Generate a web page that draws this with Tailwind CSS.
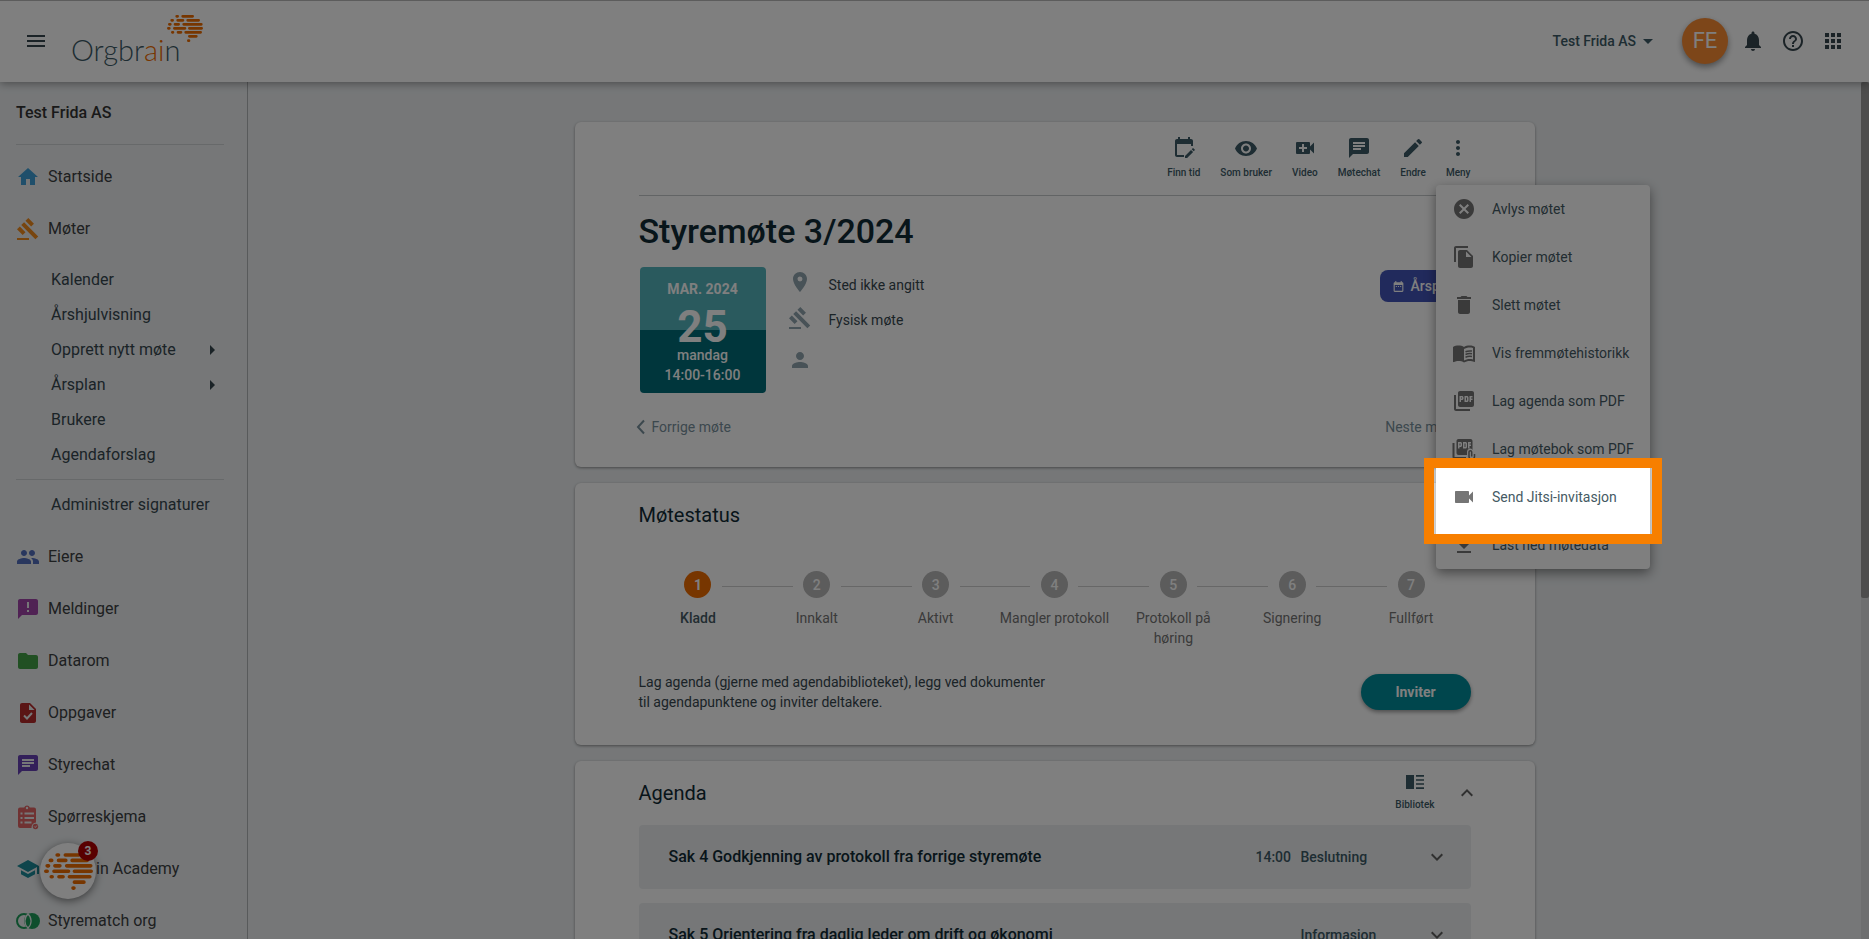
<!DOCTYPE html>
<html lang="no">
<head>
<meta charset="utf-8">
<title>Orgbrain – Styremøte 3/2024</title>
<script src="https://cdn.jsdelivr.net/npm/@tailwindcss/browser@4"></script>
</head>
<body class="h-screen overflow-hidden bg-[#eceff1] font-[Roboto,sans-serif] text-sm leading-5 text-[#37474f] flex flex-col">

<svg class="hidden" aria-hidden="true">
  <symbol id="brain" viewBox="501 45 108 81">
    <path fill="none" stroke="#ef6c00" stroke-width="8" stroke-linecap="round" d="M530 49h3M548 49h30M515 61h3M533 61h16M563 61h33M508 73h3M525 73h11M551 73h53M505 85h3M523 85h32M568 85h37M517 97h2M534 97h9M557 97h45M568 109h21M565 122h2"/>
  </symbol>
  <symbol id="gavel" viewBox="0 0 24 24"><path d="M1 21h12v2H1zM5.245 8.07l2.83-2.827 14.14 14.142-2.828 2.828zM12.317 1l5.657 5.656-2.83 2.83-5.654-5.66zM3.825 9.485l5.657 5.657-2.828 2.828-5.657-5.657z"/></symbol>
  <symbol id="chat" viewBox="0 0 24 24"><path d="M20 2H4c-1.1 0-1.99.9-1.99 2L2 22l4-4h14c1.1 0 2-.9 2-2V4c0-1.1-.9-2-2-2zM6 9h12v2H6V9zm8 5H6v-2h8v2zm4-6H6V6h12v2z"/></symbol>
  <symbol id="down" viewBox="0 0 24 24"><path d="M7.41 8.59 12 13.17l4.59-4.58L18 10l-6 6-6-6z"/></symbol>
</svg>

<header class="relative z-10 flex h-[82px] shrink-0 items-center border-t border-[#b8b8b8] bg-white px-6 pb-[2px] shadow-[0_2px_8px_rgba(0,0,0,0.35)]">
  <button aria-label="Åpne meny"><svg class="size-6 fill-[#37474f]" viewBox="0 0 24 24"><path d="M3 18h18v-2H3v2zm0-5h18v-2H3v2zm0-7v2h18V6H3z"/></svg></button>
  <a href="#" aria-label="Orgbrain" class="relative ml-[23px] h-14 w-[132px] font-[Lato,sans-serif] text-[29px] leading-8 font-light text-[#3c5a66]">
    <span class="block pt-[21px]">Orgbr<span class="text-[#ef6c00]">ai</span>n</span>
    <svg class="absolute top-[2px] right-0 h-[27px] w-9"><use href="#brain"/></svg>
  </a>
  <div class="ml-auto flex items-center">
    <button class="flex items-center font-medium text-[#3c5a66]">Test Frida AS
      <svg class="size-6 fill-[#3c5a66]" viewBox="0 0 24 24"><path d="M7 10l5 5 5-5z"/></svg></button>
    <button class="ml-[22px] size-[46px] rounded-full bg-[#fb8c33] text-[22px] text-white shadow-[0_3px_6px_rgba(0,0,0,0.4)]">FE</button>
    <div class="ml-[13px] flex gap-4 fill-[#37474f]">
      <button aria-label="Varsler"><svg class="size-6" viewBox="0 0 24 24"><path d="M12 22c1.1 0 2-.9 2-2h-4c0 1.1.89 2 2 2zm6-6v-5c0-3.07-1.64-5.64-4.5-6.32V4c0-.83-.67-1.5-1.5-1.5s-1.5.67-1.5 1.5v.68C7.63 5.36 6 7.92 6 11v5l-2 2v1h16v-1l-2-2z"/></svg></button>
      <button aria-label="Hjelp"><svg class="size-6" viewBox="0 0 24 24"><path d="M11 18h2v-2h-2v2zm1-16C6.48 2 2 6.48 2 12s4.48 10 10 10 10-4.48 10-10S17.52 2 12 2zm0 18c-4.41 0-8-3.59-8-8s3.59-8 8-8 8 3.59 8 8-3.59 8-8 8zm0-14c-2.21 0-4 1.79-4 4h2c0-1.1.9-2 2-2s2 .9 2 2c0 2-3 1.75-3 5h2c0-2.25 3-2.5 3-5 0-2.21-1.79-4-4-4z"/></svg></button>
      <button aria-label="Apper"><svg class="size-6" viewBox="0 0 24 24"><path d="M4 8h4V4H4v4zm6 12h4v-4h-4v4zm-6 0h4v-4H4v4zm0-6h4v-4H4v4zm6 0h4v-4h-4v4zm6-10v4h4V4h-4zm-6 4h4V4h-4v4zm6 6h4v-4h-4v4zm0 6h4v-4h-4v4z"/></svg></button>
    </div>
  </div>
</header>

<div class="flex min-h-0 flex-1">
  <aside class="w-[248px] shrink-0 border-r border-[#b0b4b6] pl-4 pr-[23px] text-base">
    <h2 class="pt-[19px] pb-[19px] font-medium leading-6 text-[#333]">Test Frida AS</h2>
    <hr class="w-[208px] border-[#cfd3d5]">
    <nav class="pt-[6px]">
      <a href="#" class="flex h-[52px] items-center gap-2 text-[#3c4042]"><svg class="size-6 fill-[#3f9fd6]" viewBox="0 0 24 24"><path d="M10 20v-6h4v6h5v-8h3L12 3 2 12h3v8z"/></svg>Startside</a>
      <a href="#" class="flex h-[52px] items-center gap-2 text-[#3c4042]"><svg class="size-6 fill-[#f08a1d]"><use href="#gavel"/></svg>Møter</a>
      <div class="flex flex-col py-[7px]">
        <a href="#" class="flex h-[35px] items-center pl-[35px]">Kalender</a>
        <a href="#" class="flex h-[35px] items-center pl-[35px]">Årshjulvisning</a>
        <a href="#" class="flex h-[35px] items-center justify-between pl-[35px]">Opprett nytt møte<svg class="size-6 fill-[#37474f]" viewBox="0 0 24 24"><path d="M10 17l5-5-5-5v10z"/></svg></a>
        <a href="#" class="flex h-[35px] items-center justify-between pl-[35px]">Årsplan<svg class="size-6 fill-[#37474f]" viewBox="0 0 24 24"><path d="M10 17l5-5-5-5v10z"/></svg></a>
        <a href="#" class="flex h-[35px] items-center pl-[35px]">Brukere</a>
        <a href="#" class="flex h-[35px] items-center pl-[35px]">Agendaforslag</a>
      </div>
      <hr class="w-[208px] border-[#cfd3d5]">
      <a href="#" class="mt-[7px] mb-[9px] flex h-[35px] items-center pl-[35px]">Administrer signaturer</a>
      <a href="#" class="flex h-[52px] items-center gap-2 text-[#3c4042]"><svg class="size-6 fill-[#536ebd]" viewBox="0 0 24 24"><path d="M16 11c1.66 0 2.99-1.34 2.99-3S17.66 5 16 5c-1.66 0-3 1.34-3 3s1.34 3 3 3zm-8 0c1.66 0 2.99-1.34 2.99-3S9.66 5 8 5C6.34 5 5 6.34 5 8s1.34 3 3 3zm0 2c-2.33 0-7 1.17-7 3.5V19h14v-2.5c0-2.33-4.67-3.5-7-3.5zm8 0c-.29 0-.62.02-.97.05 1.16.84 1.97 1.97 1.97 3.45V19h6v-2.5c0-2.33-4.67-3.5-7-3.5z"/></svg>Eiere</a>
      <a href="#" class="flex h-[52px] items-center gap-2 text-[#3c4042]"><svg class="size-6 fill-[#a144a8]" viewBox="0 0 24 24"><path d="M20 2H4c-1.1 0-1.99.9-1.99 2L2 22l4-4h14c1.1 0 2-.9 2-2V4c0-1.1-.9-2-2-2zm-7 9h-2V5h2v6zm0 4h-2v-2h2v2z"/></svg>Meldinger</a>
      <a href="#" class="flex h-[52px] items-center gap-2 text-[#3c4042]"><svg class="size-6 fill-[#43a047]" viewBox="0 0 24 24"><path d="M10 4H4c-1.1 0-1.99.9-1.99 2L2 18c0 1.1.9 2 2 2h16c1.1 0 2-.9 2-2V8c0-1.1-.9-2-2-2h-8l-2-2z"/></svg>Datarom</a>
      <a href="#" class="flex h-[52px] items-center gap-2 text-[#3c4042]"><svg class="size-6" viewBox="0 0 24 24"><path fill="#b52a2a" d="M14 2H6c-1.1 0-2 .9-2 2v16c0 1.1.9 2 2 2h12c1.1 0 2-.9 2-2V8l-6-6z"/><path fill="#eceff1" d="M13 3.500V9h5.500z"/><path fill="none" stroke="#eceff1" stroke-width="2" d="M8 14.500l3 3 5-5.500"/></svg>Oppgaver</a>
      <a href="#" class="flex h-[52px] items-center gap-2 text-[#3c4042]"><svg class="size-6 fill-[#6740b4]"><use href="#chat"/></svg>Styrechat</a>
      <a href="#" class="flex h-[52px] items-center gap-2 text-[#3c4042]"><svg class="size-6 overflow-visible" viewBox="0 0 24 24"><path fill="#e06464" d="M18 2.500h-4.200a3 3 0 0 0-5.600 0H4a2 2 0 0 0-2 2V21a2 2 0 0 0 2 2h11.500a5 5 0 0 1 4.500-5.500v-13a2 2 0 0 0-2-2z"/><circle cx="11" cy="3" r="1.200" fill="#eceff1"/><path stroke="#eceff1" stroke-width="1.800" d="M4.500 8.500h2M8.500 8.500H18M4.500 13h2M8.500 13H18M4.500 17.500h2M8.500 17.500h7"/><circle cx="19.500" cy="21.500" r="2.700" fill="#e06464"/><path fill="none" stroke="#eceff1" d="M18.300 21.500l1 1 1.600-2"/></svg>Spørreskjema</a>
      <a href="#" class="flex h-[52px] items-center gap-2 text-[#3c4042]"><svg class="size-6 fill-[#1c8a99]" viewBox="0 0 24 24"><path d="M5 13.180v4L12 21l7-3.820v-4L12 17l-7-3.820zM12 3L1 9l11 6 9-4.910V17h2V9L12 3z"/></svg>Orgbrain Academy</a>
      <a href="#" class="flex h-[52px] items-center gap-2 text-[#3c4042]"><svg class="size-6 overflow-visible" viewBox="0 0 24 24"><circle cx="8" cy="12" r="7" fill="none" stroke="#1f9d5b" stroke-width="2"/><circle cx="16" cy="12" r="8" fill="#1f9d5b"/><path fill="none" stroke="#eceff1" stroke-width="1.200" d="M12 5a9.500 9.500 0 0 0 0 14M12 5a9.500 9.500 0 0 1 0 14"/></svg>Styrematch org</a>
    </nav>
  </aside>

  <main class="min-w-0 flex-1 pt-10">
    <div class="mx-auto flex w-[960px] max-w-full flex-col gap-4">

      <section class="rounded-md bg-white px-16 pb-[30px] shadow-[0_1px_3px_rgba(0,0,0,0.4)]">
        <div class="flex h-[74px] justify-end gap-5 border-b border-[#c4c8ca] pt-[14px] text-[10px] leading-3 font-medium text-[#3c5a66]">
          <button class="flex flex-col items-center gap-[7px] self-start"><svg class="size-6 fill-[#3c5a66]" viewBox="0 0 24 24"><path d="M19 3h-1V1h-2v2H8V1H6v2H5c-1.100 0-2 .900-2 2v14c0 1.100.900 2 2 2h7v-2H5V8h14v2h2V5c0-1.100-.900-2-2-2zM22.700 13.600l-1.300-1.300c-.200-.200-.500-.200-.700 0l-1 1 2 2 1-1c.200-.200.200-.500 0-.700zM13 19.900V22h2.100l6-6-2.100-2.100z"/></svg>Finn tid</button>
          <button class="flex flex-col items-center gap-[7px] self-start"><svg class="size-6 fill-[#3c5a66]" viewBox="0 0 24 24"><path d="M12 5C7 5 2.730 8.110 1 12.500 2.730 16.890 7 20 12 20s9.270-3.110 11-7.500C21.270 8.110 17 5 12 5zm0 12.500c-2.760 0-5-2.240-5-5s2.240-5 5-5 5 2.240 5 5-2.240 5-5 5zm0-8c-1.660 0-3 1.340-3 3s1.340 3 3 3 3-1.340 3-3-1.340-3-3-3z"/></svg>Som bruker</button>
          <button class="flex flex-col items-center gap-[7px] self-start"><svg class="size-6 fill-[#3c5a66]" viewBox="0 0 24 24"><path d="M17 10.500V7a1 1 0 0 0-1-1H4a1 1 0 0 0-1 1v10a1 1 0 0 0 1 1h12a1 1 0 0 0 1-1v-3.500l4 4v-11l-4 4zM14 13h-3v3H9v-3H6v-2h3V8h2v3h3v2z"/></svg>Video</button>
          <button class="flex flex-col items-center gap-[7px] self-start"><svg class="size-6 fill-[#3c5a66]"><use href="#chat"/></svg>Møtechat</button>
          <button class="flex flex-col items-center gap-[7px] self-start"><svg class="size-6 fill-[#3c5a66]" viewBox="0 0 24 24"><path d="M3 17.250V21h3.750L17.810 9.940l-3.750-3.750L3 17.250zM20.710 7.040a1 1 0 0 0 0-1.410l-2.340-2.340a1 1 0 0 0-1.410 0l-1.830 1.830 3.750 3.750 1.830-1.830z"/></svg>Endre</button>
          <div class="relative self-start">
            <button aria-haspopup="menu" aria-expanded="true" class="flex flex-col items-center gap-[7px]"><svg class="size-6 fill-[#3c5a66]" viewBox="0 0 24 24"><path d="M12 8c1.100 0 2-.900 2-2s-.900-2-2-2-2 .900-2 2 .900 2 2 2zm0 2c-1.100 0-2 .900-2 2s.900 2 2 2 2-.900 2-2-.900-2-2-2zm0 6c-1.100 0-2 .900-2 2s.900 2 2 2 2-.900 2-2-.900-2-2-2z"/></svg>Meny</button>

            <!-- Open meeting menu; the spotlight on one entry dims the rest of the page -->
            <div role="menu" class="absolute top-[49px] -left-[10px] z-50 w-[214px] rounded bg-white text-sm leading-5 font-normal text-[#455a64] shadow-[0_4px_12px_rgba(0,0,0,0.45)]">
              <button role="menuitem" class="flex h-12 w-full items-center gap-4 whitespace-nowrap pl-4"><svg class="size-6 shrink-0 fill-[#757575]" viewBox="0 0 24 24"><path d="M12 2C6.470 2 2 6.470 2 12s4.470 10 10 10 10-4.470 10-10S17.530 2 12 2zm5 13.590L15.590 17 12 13.410 8.410 17 7 15.590 10.590 12 7 8.410 8.410 7 12 10.590 15.590 7 17 8.410 13.410 12 17 15.590z"/></svg>Avlys møtet</button>
              <button role="menuitem" class="flex h-12 w-full items-center gap-4 whitespace-nowrap pl-4"><svg class="size-6 shrink-0 fill-[#757575]" viewBox="0 0 24 24"><path d="M16 1H4c-1.100 0-2 .900-2 2v14h2V3h12V1zm-1 4l6 6v10c0 1.100-.900 2-2 2H7.990C6.890 23 6 22.100 6 21l.010-14c0-1.100.890-2 1.990-2h7zm-1 7h5.500L14 6.500V12z"/></svg>Kopier møtet</button>
              <button role="menuitem" class="flex h-12 w-full items-center gap-4 whitespace-nowrap pl-4"><svg class="size-6 shrink-0 fill-[#757575]" viewBox="0 0 24 24"><path d="M6 19c0 1.100.900 2 2 2h8c1.100 0 2-.900 2-2V7H6v12zM19 4h-3.500l-1-1h-5l-1 1H5v2h14V4z"/></svg>Slett møtet</button>
              <button role="menuitem" class="flex h-12 w-full items-center gap-4 whitespace-nowrap pl-4"><svg class="size-6 shrink-0 fill-[#757575]" viewBox="0 0 24 24"><path d="M21 5c-1.110-.350-2.330-.500-3.500-.500-1.950 0-4.050.400-5.500 1.500-1.450-1.100-3.550-1.500-5.500-1.500S2.450 4.900 1 6v14.650c0 .250.250.500.500.500.100 0 .150-.050.250-.050C3.100 20.450 5.050 20 6.500 20c1.950 0 4.050.400 5.500 1.500 1.350-.850 3.800-1.500 5.500-1.500 1.650 0 3.350.300 4.750 1.050.100.050.150.050.250.050.250 0 .500-.250.500-.500V6c-.600-.450-1.250-.750-2-1zm0 13.500c-1.100-.350-2.300-.500-3.500-.500-1.700 0-4.150.650-5.500 1.500V8c1.350-.850 3.800-1.500 5.500-1.500 1.200 0 2.400.150 3.500.500v11.500z"/><path fill="none" stroke="#757575" stroke-width="1.500" d="M13.500 10.800q3-1.300 6.500-.700M13.500 13.500q3-1.300 6.500-.700M13.500 16.200q3-1.300 6.500-.700"/></svg>Vis fremmøtehistorikk</button>
              <button role="menuitem" class="flex h-12 w-full items-center gap-4 whitespace-nowrap pl-4"><svg class="size-6 shrink-0 fill-[#757575]" viewBox="0 0 24 24"><path d="M20 2H8c-1.100 0-2 .900-2 2v12c0 1.100.900 2 2 2h12c1.100 0 2-.900 2-2V4c0-1.100-.900-2-2-2zm-8.500 7.500c0 .830-.670 1.500-1.500 1.500H9v2H7.500V7H10c.830 0 1.500.670 1.500 1.500v1zm5 2c0 .830-.670 1.500-1.500 1.500h-2.500V7H15c.830 0 1.500.670 1.500 1.500v3zm4-3H19v1h1.500V11H19v2h-1.500V7h3v1.500zM9 9.500h1v-1H9v1zM4 6H2v14c0 1.100.900 2 2 2h14v-2H4V6zm10 5.500h1v-3h-1v3z"/></svg>Lag agenda som PDF</button>
              <button role="menuitem" class="flex h-12 w-full items-center gap-4 whitespace-nowrap pl-4"><svg class="size-6 shrink-0 fill-[#757575]" viewBox="0 0 24 24"><path d="M18.500 2H6.500c-1.100 0-2 .900-2 2v12c0 1.100.900 2 2 2H15v-3.500a3 3 0 0 1 5.500-1.500V4c0-1.100-.900-2-2-2zM10 8.500C10 9.300 9.300 10 8.500 10h-1v1.500H6V5h2.500C9.300 5 10 5.700 10 6.500zm5 1.500c0 .800-.700 1.500-1.500 1.500H11V5h2.500c.800 0 1.500.700 1.500 1.500zm4-3.500h-1.500v1H19V9h-1.500v2.500H16V5h3zM7.500 8.500h1v-2h-1zM12.500 10h1V6.500h-1zM2.500 6h-2v14c0 1.100.900 2 2 2H14v-2H2.500z"/><path fill="none" stroke="#757575" stroke-width="1.500" d="M17 14.500v5a2.500 2.500 0 0 0 5.500 0V17M19.700 19.500V15a1.300 1.300 0 0 0-2.700 0"/></svg>Lag møtebok som PDF</button>
              <div class="relative">
                <button role="menuitem" class="flex h-12 w-full items-center gap-4 whitespace-nowrap pl-4"><svg class="size-6 shrink-0 fill-[#757575]" viewBox="0 0 24 24"><path d="M17 10.500V7c0-.550-.450-1-1-1H4c-.550 0-1 .450-1 1v10c0 .550.450 1 1 1h12c.550 0 1-.450 1-1v-3.500l4 4v-11l-4 4z"/></svg>Send Jitsi-invitasjon</button>
                <div class="pointer-events-none absolute -inset-x-3 -top-[15px] -bottom-[23px] z-10 border-10 border-[#f77f00] shadow-[0_0_0_9999px_rgba(0,0,0,0.5)]"></div>
              </div>
              <button role="menuitem" class="flex h-12 w-full items-center gap-4 whitespace-nowrap pl-4"><svg class="size-6 shrink-0 fill-[#757575]" viewBox="0 0 24 24"><path d="M19 9h-4V3H9v6H5l7 7 7-7zM5 18v2h14v-2H5z"/></svg>Last ned møtedata</button>
            </div>
          </div>
        </div>

        <h1 class="pt-[15px] text-[34px] leading-10 font-medium text-[#102a35]">Styremøte 3/2024</h1>
        <div class="flex pt-4 pl-[1px]">
          <div class="flex size-[126px] flex-col items-center rounded bg-linear-to-b from-[#54b4bc] from-50% to-[#006c79] to-50% pt-3 font-medium text-white">
            <span class="font-bold">MAR. 2024</span>
            <span class="pt-[6px] pb-1 text-[44px] leading-[44px] font-bold">25</span>
            <span class="-mt-2">mandag</span>
            <span>14:00-16:00</span>
          </div>
          <ul class="ml-[22px] flex flex-1 flex-col text-[#37474f]">
            <li class="flex h-[35px] items-center"><svg class="mr-[17px] mb-[6px] size-6 fill-[#90a4ae]" viewBox="0 0 24 24"><path d="M12 2C8.130 2 5 5.130 5 9c0 5.250 7 13 7 13s7-7.750 7-13c0-3.870-3.130-7-7-7zm0 9.500a2.500 2.500 0 0 1 0-5 2.500 2.500 0 0 1 0 5z"/></svg>Sted ikke angitt</li>
            <li class="flex h-[35px] items-center"><svg class="mr-[17px] mb-1 size-6 fill-[#90a4ae]"><use href="#gavel"/></svg>Fysisk møte</li>
            <li class="flex h-[46px] items-center"><svg class="size-6 fill-[#90a4ae]" viewBox="0 0 24 24"><path d="M12 12c2.210 0 4-1.790 4-4s-1.790-4-4-4-4 1.790-4 4 1.790 4 4 4zm0 2c-2.670 0-8 1.340-8 4v2h16v-2c0-2.660-5.330-4-8-4z"/></svg></li>
          </ul>
          <button class="mt-[3px] flex h-8 w-[91px] items-center gap-[6px] self-start rounded-lg bg-[#4254b8] pl-3 font-medium text-white"><svg class="size-[13px] shrink-0 fill-white" viewBox="0 0 24 24"><path d="M9 11H7v2h2v-2zm4 0h-2v2h2v-2zm4 0h-2v2h2v-2zm2-7h-1V2h-2v2H8V2H6v2H5c-1.110 0-2 .900-2 2v14c0 1.100.890 2 2 2h14c1.100 0 2-.900 2-2V6c0-1.100-.900-2-2-2zm0 16H5V9h14v11z"/></svg>Årsplan</button>
        </div>
        <div class="flex justify-between pt-6 text-[#78909c]">
          <a href="#" class="-ml-1 flex items-center gap-[6px]"><svg class="h-5 w-[11px] fill-none stroke-[#78909c] stroke-2" viewBox="0 0 11 20"><path d="M9 3.500L3 10l6 6.500"/></svg>Forrige møte</a>
          <a href="#" class="-mr-1 flex items-center gap-[6px]">Neste møte<svg class="h-5 w-[11px] fill-none stroke-[#78909c] stroke-2" viewBox="0 0 11 20"><path d="M2 3.500L8 10l-6 6.500"/></svg></a>
        </div>
      </section>

      <section class="rounded-md bg-white px-16 pt-5 pb-[33px] shadow-[0_1px_3px_rgba(0,0,0,0.4)]">
        <h2 class="text-xl leading-6 text-[#102a35]">Møtestatus</h2>
        <ol class="grid grid-cols-7 pt-11 text-center text-[#757575]">
          <li class="relative flex flex-col items-center font-medium text-[#455a64]"><span class="mb-[10px] flex size-[27px] items-center justify-center rounded-full bg-[#ef6c00] font-bold text-white">1</span>Kladd<span class="absolute top-[15px] left-[calc(50%+24px)] h-px w-[calc(100%-48px)] bg-[#cfcfcf]"></span></li>
          <li class="relative flex flex-col items-center"><span class="mb-[10px] flex size-[27px] items-center justify-center rounded-full bg-[#b8b8b8] font-medium text-white">2</span>Innkalt<span class="absolute top-[15px] left-[calc(50%+24px)] h-px w-[calc(100%-48px)] bg-[#cfcfcf]"></span></li>
          <li class="relative flex flex-col items-center"><span class="mb-[10px] flex size-[27px] items-center justify-center rounded-full bg-[#b8b8b8] font-medium text-white">3</span>Aktivt<span class="absolute top-[15px] left-[calc(50%+24px)] h-px w-[calc(100%-48px)] bg-[#cfcfcf]"></span></li>
          <li class="relative flex flex-col items-center"><span class="mb-[10px] flex size-[27px] items-center justify-center rounded-full bg-[#b8b8b8] font-medium text-white">4</span>Mangler protokoll<span class="absolute top-[15px] left-[calc(50%+24px)] h-px w-[calc(100%-48px)] bg-[#cfcfcf]"></span></li>
          <li class="relative flex flex-col items-center px-5"><span class="mb-[10px] flex size-[27px] items-center justify-center rounded-full bg-[#b8b8b8] font-medium text-white">5</span>Protokoll på høring<span class="absolute top-[15px] left-[calc(50%+24px)] h-px w-[calc(100%-48px)] bg-[#cfcfcf]"></span></li>
          <li class="relative flex flex-col items-center"><span class="mb-[10px] flex size-[27px] items-center justify-center rounded-full bg-[#b8b8b8] font-medium text-white">6</span>Signering<span class="absolute top-[15px] left-[calc(50%+24px)] h-px w-[calc(100%-48px)] bg-[#cfcfcf]"></span></li>
          <li class="relative flex flex-col items-center"><span class="mb-[10px] flex size-[27px] items-center justify-center rounded-full bg-[#b8b8b8] font-medium text-white">7</span>Fullført</li>
        </ol>
        <div class="flex items-center justify-between pt-6">
          <p class="w-[416px]">Lag agenda (gjerne med agendabiblioteket), legg ved dokumenter til agendapunktene og inviter deltakere.</p>
          <button class="h-9 w-[110px] rounded-full bg-[#008c9a] font-bold text-white shadow-[0_2px_4px_rgba(0,0,0,0.4)]">Inviter</button>
        </div>
      </section>

      <section class="rounded-md bg-white px-16 pb-8 shadow-[0_1px_3px_rgba(0,0,0,0.4)]">
        <div class="flex h-16 items-center">
          <h2 class="text-xl leading-6 text-[#102a35]">Agenda</h2>
          <button class="mb-[5px] ml-auto flex flex-col items-center gap-[5px] text-[10px] leading-3 font-medium text-[#3c5a66]"><svg class="size-6 fill-[#3c5a66]" viewBox="0 0 24 24"><path d="M3 5h8v14H3zM13 5h8v1.800h-8zM13 9.200h8v1.600h-8zM13 13.200h8v1.600h-8zM13 17.200h8V19h-8z"/></svg>Bibliotek</button>
          <button aria-label="Skjul agenda" class="-mr-2 ml-5"><svg class="size-6 rotate-180 fill-[#616161]"><use href="#down"/></svg></button>
        </div>
        <div class="flex flex-col gap-[14px]">
          <article class="flex h-16 items-center rounded bg-[#eceff1] pr-[22px] pl-[30px]">
            <h3 class="flex-1 text-base font-medium text-[#102a35]">Sak 4 Godkjenning av protokoll fra forrige styremøte</h3>
            <span class="w-[45px] font-medium text-[#3c5a66]">14:00</span>
            <span class="w-[124px] font-medium text-[#3c5a66]">Beslutning</span>
            <button aria-label="Vis sak 4" class="size-6"><svg class="size-6 fill-[#616161]"><use href="#down"/></svg></button>
          </article>
          <article class="flex h-16 items-center rounded bg-[#eceff1] pr-[22px] pl-[30px]">
            <h3 class="flex-1 text-base font-medium text-[#102a35]">Sak 5 Orientering fra daglig leder om drift og økonomi</h3>
            <span class="w-[124px] font-medium text-[#3c5a66]">Informasjon</span>
            <button aria-label="Vis sak 5" class="size-6"><svg class="size-6 fill-[#616161]"><use href="#down"/></svg></button>
          </article>
        </div>
      </section>
    </div>
  </main>

  <div class="w-2 shrink-0 bg-[#dcdfe1]" aria-hidden="true"><div class="h-[516px] rounded-xs bg-[#9a9a9a]"></div></div>
</div>

<!-- Floating help launcher -->
<button aria-label="Hjelpesenter, 3 nye" class="fixed bottom-10 left-10 z-20 flex size-14 items-center justify-center rounded-full bg-white shadow-[0_2px_8px_rgba(0,0,0,0.5)]">
  <svg class="h-[37px] w-[49px]"><use href="#brain"/></svg>
  <span class="absolute -top-[2px] -right-[2px] flex size-5 items-center justify-center rounded-full bg-[#b30000] text-xs font-bold text-white">3</span>
</button>
</body>
</html>
